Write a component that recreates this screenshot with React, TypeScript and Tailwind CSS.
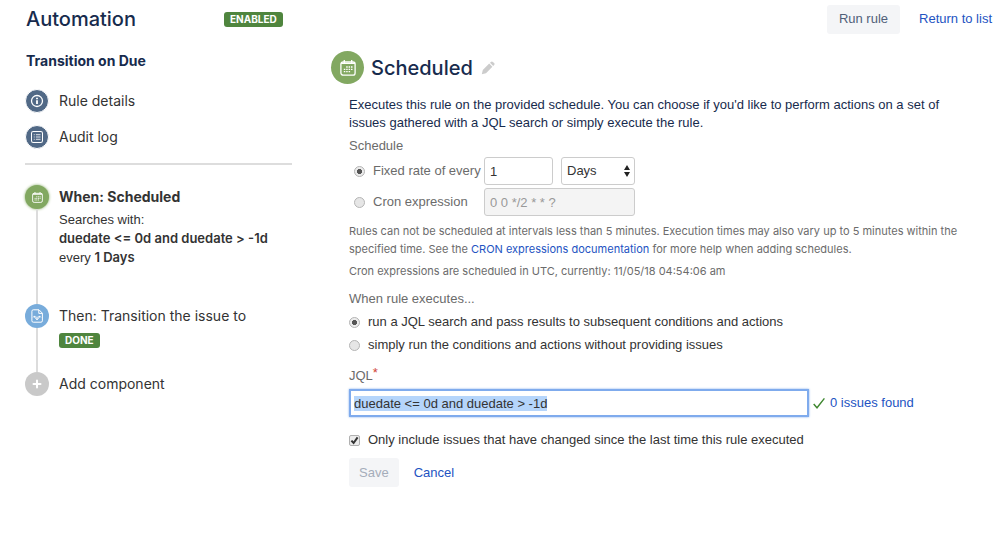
import { useEffect, useRef } from "react";
import type { ReactNode } from "react";

function InfoIcon() {
  return (
    <svg viewBox="0 0 24 24" className="h-6 w-6" fill="none" stroke="#fff" aria-hidden="true">
      <circle cx="12" cy="12" r="6" strokeWidth="1.4" />
      <path d="M12 11.2v4" strokeWidth="2" />
      <path d="M12 8.4v1.7" strokeWidth="2" />
    </svg>
  );
}

function LogIcon() {
  return (
    <svg viewBox="0 0 24 24" className="h-6 w-6" fill="none" stroke="#fff" aria-hidden="true">
      <rect x="6" y="6" width="12" height="12" rx="2" strokeWidth="1.1" />
      <path d="M8.5 9.5h1M8.5 12h1M8.5 14.5h1M10.8 9.5h5M10.8 12h5M10.8 14.5h5" strokeWidth="0.9" />
    </svg>
  );
}

function CalendarIcon({ className }: { className: string }) {
  return (
    <svg viewBox="0 0 16 16" className={className} fill="none" stroke="#fff" aria-hidden="true">
      <rect x="0.9" y="1.9" width="14.2" height="13.2" rx="2.2" strokeWidth="1.3" />
      <path d="M1 3.2h14" strokeWidth="1.6" />
      <path d="M4.3 0v3M11.7 0v3" strokeWidth="1.3" />
      <path d="M6.2 7h6.4M3.8 9.3h8.8M3.8 11.6h6.4" strokeWidth="1.3" strokeDasharray="1.5 0.9" />
    </svg>
  );
}

function TransitionIcon() {
  return (
    <svg viewBox="0 0 24 24" className="h-6 w-6" fill="none" stroke="#fff" strokeWidth="1" aria-hidden="true">
      <path d="M8.3 5.8h5.7l3.4 3.4v7.6a1.4 1.4 0 0 1-1.4 1.4H8.3a1.4 1.4 0 0 1-1.4-1.4V7.2a1.4 1.4 0 0 1 1.4-1.4z" />
      <path d="M13.8 6v3.4h3.4" />
      <path d="M8.2 13.4l1.3-1.5 1.3 1.5M13.2 13.4l1.3-1.5 1.3 1.5M9.5 12.2c0 1.8 1 2 2.5 3.4 1.5-1.4 2.5-1.6 2.5-3.4M12 12.6v3.4" />
    </svg>
  );
}

function PlusIcon() {
  return (
    <svg viewBox="0 0 24 24" className="h-6 w-6" fill="none" stroke="#fff" strokeWidth="2" strokeLinecap="round" aria-hidden="true">
      <path d="M12 8.5v7M8.5 12h7" />
    </svg>
  );
}

function Lozenge({ children }: { children: ReactNode }) {
  return (
    <span className="inline-flex h-[15px] items-center rounded-[3px] bg-[#4f853e] px-[6px] text-[10px] font-bold text-white">
      {children}
    </span>
  );
}

function SideLink({ icon, label }: { icon: ReactNode; label: string }) {
  return (
    <a href="#" className="flex items-center gap-[10px] text-sm text-[#333]">
      <span className="flex h-6 w-6 items-center justify-center rounded-full border border-white bg-[#516986]">{icon}</span>
      {label}
    </a>
  );
}

function Step({ icon, tone, children, last }: { icon: ReactNode; tone: string; children: ReactNode; last?: boolean }) {
  return (
    <li className="flex gap-[10px]">
      <div className="flex flex-col items-center">
        <span className={`flex h-6 w-6 shrink-0 items-center justify-center rounded-full ${tone}`}>{icon}</span>
        {last ? null : <span className="w-[2px] flex-1 bg-[#dcdcdc]" />}
      </div>
      <div className="flex-1 text-[#333]">{children}</div>
    </li>
  );
}

const radio =
  "h-[11px] w-[11px] shrink-0 appearance-none rounded-full border border-[#b5b5b5] bg-[#e6e6e6] bg-radial checked:from-[#555] checked:from-35% checked:to-[#ececec] checked:to-45%";
const field = "h-7 rounded-[3px] border border-[#ccc] px-[5px] text-[13px] text-[#333]";

export default function App() {
  const jql = useRef<HTMLInputElement>(null);

  useEffect(() => {
    jql.current?.focus();
    jql.current?.select();
  }, []);

  return (
    <div className="min-h-screen bg-white pt-1 font-['Inter',sans-serif] text-[13px] text-[#333]">
      <header className="flex h-[30px] items-center pr-[7px] pl-[26px]">
        <h1 className="w-[198px] text-xl font-medium text-[#172b4d]">Automation</h1>
        <Lozenge>ENABLED</Lozenge>
        <button type="button" className="ml-auto h-[29px] rounded-[3px] bg-[#f4f5f7] px-3 font-['Liberation_Sans',sans-serif] text-[#505f79]">
          Run rule
        </button>
        <a href="#" className="ml-[19px] font-['Liberation_Sans',sans-serif] text-[#2353c2]">Return to list</a>
      </header>

      <div className="flex">
        <aside className="w-[292px] shrink-0 pt-[17px] pl-[25px]">
          <h2 className="pl-px text-sm leading-5 font-bold text-[#172b4d]">Transition on Due</h2>
          <nav className="mt-[18px] flex flex-col gap-3 border-b-2 border-[#ddd] pb-[14px]">
            <SideLink icon={<InfoIcon />} label="Rule details" />
            <SideLink icon={<LogIcon />} label="Audit log" />
          </nav>
          <ol className="mt-5">
            <Step tone="bg-[#82a861] shadow-[0_0_3px_#82a861]" icon={<CalendarIcon className="h-[11px] w-[11px]" />}>
              <h3 className="text-sm leading-6 font-bold">When: Scheduled</h3>
              <p className="pt-px pb-[37px] leading-[19px]">
                <span className="font-['Liberation_Sans',sans-serif]">Searches with:</span>
                <br />
                <strong className="font-semibold">duedate &lt;= 0d and duedate &gt; -1d</strong>
                <br />
                <span className="font-['Liberation_Sans',sans-serif]">every</span> <strong className="font-semibold">1 Days</strong>
              </p>
            </Step>
            <Step tone="bg-[#78acdb]" icon={<TransitionIcon />}>
              <h3 className="text-sm leading-6">Then: Transition the issue to</h3>
              <div className="flex pt-[5px] pb-6">
                <Lozenge>DONE</Lozenge>
              </div>
            </Step>
            <Step tone="bg-[#c9c9c9]" icon={<PlusIcon />} last>
              <button type="button" className="block text-sm leading-6">Add component</button>
            </Step>
          </ol>
        </aside>

        <main className="min-w-0 flex-1 pt-[17px] pl-[39px] font-['Liberation_Sans',sans-serif]">
          <div className="flex items-center">
            <span className="flex h-[33px] w-[33px] items-center justify-center rounded-full bg-[#82a861]">
              <CalendarIcon className="h-4 w-4" />
            </span>
            <h2 className="ml-[7px] font-['Inter',sans-serif] text-xl font-medium text-[#172b4d]">Scheduled</h2>
            <button type="button" aria-label="Edit name" className="ml-2">
              <svg viewBox="0 0 14 14" className="h-[14px] w-[14px]" fill="#ccc" aria-hidden="true">
                <path d="M0.8 13.2l1-4.2L8.2 2.6l3.2 3.2L5 12.2zM9 1.8l.9-.9a1.4 1.4 0 0 1 2 0l1.2 1.2a1.4 1.4 0 0 1 0 2l-.9.9z" />
              </svg>
            </button>
          </div>

          <form className="pr-9 pl-[18px]" onSubmit={(e) => e.preventDefault()}>
            <p className="mt-3 leading-[18px] text-[#172b4d]">
              Executes this rule on the provided schedule. You can choose if you'd like to perform actions on a set of
              issues gathered with a JQL search or simply execute the rule.
            </p>

            <fieldset className="mt-[5px] text-[#6b6b6b]">
              <legend className="leading-[18px]">Schedule</legend>
              <div className="mt-[2px] flex items-center pl-[5px]">
                <label className="flex w-[130px] items-center gap-2 whitespace-nowrap">
                  <input type="radio" name="schedule" defaultChecked className={radio} />
                  Fixed rate of every
                </label>
                <input type="text" aria-label="Rate" defaultValue="1" className={`w-[69px] ${field}`} />
                <div className="relative ml-2">
                  <select aria-label="Unit" className={`w-[74px] appearance-none bg-white ${field}`}>
                    <option>Days</option>
                  </select>
                  <svg viewBox="0 0 6 12" className="pointer-events-none absolute top-2 right-[5px] h-3 w-[6px]" fill="#222" aria-hidden="true">
                    <path d="M3 0l3 5H0zM3 12l3-5H0z" />
                  </svg>
                </div>
              </div>
              <div className="mt-[3px] flex items-center pl-[5px]">
                <label className="flex w-[130px] items-center gap-2 whitespace-nowrap">
                  <input type="radio" name="schedule" className={radio} />
                  Cron expression
                </label>
                <input
                  type="text"
                  aria-label="Cron"
                  disabled
                  defaultValue="0 0 */2 * * ?"
                  className="h-7 w-[151px] rounded-[3px] border border-[#ccc] bg-[#f4f4f4] px-[5px] text-[13px] text-[#999]"
                />
              </div>
            </fieldset>

            <div className="font-['Inter',sans-serif] text-[11px] leading-[18px] text-[#6b6b6b]">
              <p className="mt-[6px]">
                Rules can not be scheduled at intervals less than 5 minutes. Execution times may also vary up to 5 minutes within the
                specified time. See the <a href="#" className="text-[#2353c2]">CRON expressions documentation</a> for more help when adding schedules.
              </p>
              <p className="mt-1">Cron expressions are scheduled in UTC, currently: 11/05/18 04:54:06 am</p>
            </div>

            <fieldset className="mt-[10px]">
              <legend className="leading-[18px] text-[#6b6b6b]">When rule executes...</legend>
              <label className="mt-[5px] flex items-center gap-2 leading-[18px]">
                <input type="radio" name="execute" defaultChecked className={radio} />
                run a JQL search and pass results to subsequent conditions and actions
              </label>
              <label className="mt-[5px] flex items-center gap-2 leading-[18px]">
                <input type="radio" name="execute" className={radio} />
                simply run the conditions and actions without providing issues
              </label>
            </fieldset>

            <label htmlFor="jql" className="mt-[13px] flex leading-[18px] text-[#6b6b6b]">
              JQL<span className="text-[13px] leading-3 text-[#d04437]">*</span>
            </label>
            <div className="mt-1 flex items-center">
              <input
                id="jql"
                ref={jql}
                type="text"
                defaultValue="duedate <= 0d and duedate > -1d"
                className="h-7 w-[460px] border-2 border-[#7fabed] px-[3px] text-[13px] text-[#333] shadow-[0_0_2px_#7fabed] outline-none selection:bg-[#b5d5fb] selection:text-[#333]"
              />
              <svg viewBox="0 0 12 12" className="ml-1 h-3 w-3" fill="none" stroke="#3f8730" strokeWidth="1.4" aria-hidden="true">
                <path d="M0.7 7l3.3 3.8L11.4 1.4" />
              </svg>
              <a href="#" className="ml-[5px] text-[#2353c2]">0 issues found</a>
            </div>

            <label className="mt-[14px] flex items-center gap-2 leading-[18px]">
              <span className="relative flex">
                <input
                  type="checkbox"
                  defaultChecked
                  className="h-[11px] w-[11px] appearance-none rounded-[2px] border border-[#b0b0b0] bg-[#ececec]"
                />
                <svg viewBox="0 0 11 11" className="pointer-events-none absolute inset-0 h-[11px] w-[11px]" fill="none" stroke="#333" strokeWidth="2" aria-hidden="true">
                  <path d="M2.4 5.6l2.2 2.4L8.6 2.4" />
                </svg>
              </span>
              Only include issues that have changed since the last time this rule executed
            </label>

            <div className="mt-[9px] flex items-center">
              <button type="submit" disabled className="h-[29px] rounded-[3px] bg-[#f4f5f7] px-[10px] text-[#a5adba]">
                Save
              </button>
              <button type="button" className="ml-[15px] text-[#2353c2]">Cancel</button>
            </div>
          </form>
        </main>
      </div>
    </div>
  );
}
